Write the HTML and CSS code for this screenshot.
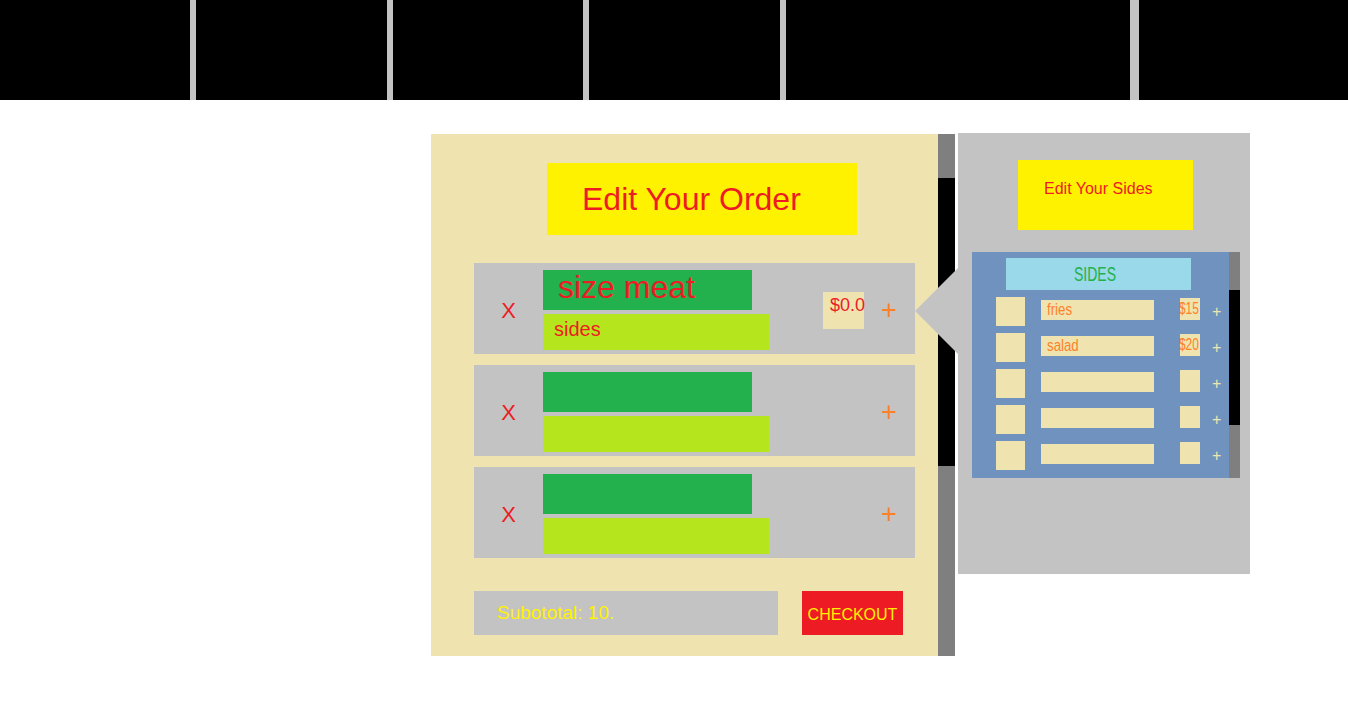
FILE: index.html
```html
<!DOCTYPE html>
<html>

<head>
    <title>Edit Your Order</title>
    <link rel="stylesheet" href="styles.css">
</head>

<body>
    <!-- top menu, empty cells for now -->
    <div class="nav">
        <div class="nav-cell c1"></div>
        <div class="nav-cell c2"></div>
        <div class="nav-cell c3"></div>
        <div class="nav-cell c4"></div>
        <div class="nav-cell c5"></div>
        <div class="nav-cell c6"></div>
    </div>

    <div class="content">
        <div class="order-wrap">
            <div class="order">
                <div class="order-title">Edit Your Order</div>

                <div class="item">
                    <div class="remove">X</div>
                    <div class="bars">
                        <div class="item-name">size meat</div>
                        <div class="item-sides">sides</div>
                    </div>
                    <div class="price">$0.0</div>
                    <div class="add">+</div>
                </div>

                <div class="item">
                    <div class="remove">X</div>
                    <div class="bars">
                        <div class="item-name"></div>
                        <div class="item-sides"></div>
                    </div>
                    <div class="price empty"></div>
                    <div class="add">+</div>
                </div>

                <div class="item">
                    <div class="remove">X</div>
                    <div class="bars">
                        <div class="item-name"></div>
                        <div class="item-sides"></div>
                    </div>
                    <div class="price empty"></div>
                    <div class="add">+</div>
                </div>

                <div class="footer">
                    <div class="subtotal">Subototal: 10.</div>
                    <button class="checkout">CHECKOUT</button>
                </div>
            </div>
            <div class="scroll big">
                <div class="thumb-bar"></div>
            </div>
        </div>

        <div class="sides-panel">
            <div class="pointer"></div>
            <div class="sides-title">Edit Your Sides</div>

            <div class="sides-wrap">
                <div class="sides-list">
                    <div class="sides-head"><span class="narrow">SIDES</span></div>

                    <div class="side-row">
                        <div class="side-pic"></div>
                        <div class="side-name"><span class="narrow">fries</span></div>
                        <div class="side-price"><span class="narrow">$15</span></div>
                        <div class="side-add">+</div>
                    </div>
                    <div class="side-row">
                        <div class="side-pic"></div>
                        <div class="side-name"><span class="narrow">salad</span></div>
                        <div class="side-price"><span class="narrow">$20</span></div>
                        <div class="side-add">+</div>
                    </div>
                    <div class="side-row">
                        <div class="side-pic"></div>
                        <div class="side-name"></div>
                        <div class="side-price"></div>
                        <div class="side-add">+</div>
                    </div>
                    <div class="side-row">
                        <div class="side-pic"></div>
                        <div class="side-name"></div>
                        <div class="side-price"></div>
                        <div class="side-add">+</div>
                    </div>
                    <div class="side-row">
                        <div class="side-pic"></div>
                        <div class="side-name"></div>
                        <div class="side-price"></div>
                        <div class="side-add">+</div>
                    </div>
                </div>
                <div class="scroll small">
                    <div class="thumb-bar"></div>
                </div>
            </div>
        </div>
    </div>
</body>

</html>
```

FILE: styles.css
```css
body {
    margin: 0;
    font-family: "Liberation Sans", Arial, sans-serif;
    background-color: white;
}

div {
    box-sizing: border-box;
}

/* menu bar */

.nav {
    display: flex;
    gap: 6px;
    height: 100px;
    background-color: #c3c3c3;
}

.nav-cell {
    background-color: black;
}

.c1 { width: 190px; }
.c2 { width: 191px; }
.c3 { width: 190px; }
.c4 { width: 191px; }
.c5 { width: 344px; }
.c6 { flex: 1; margin-left: 3px; }

.content {
    display: flex;
    align-items: flex-start;
    padding-top: 33px;
    padding-left: 431px;
}

/* order panel */

.order-wrap {
    display: flex;
    margin-top: 1px;
}

.order {
    width: 507px;
    height: 522px;
    background-color: #efe4b0;
    padding-top: 29px;
    padding-left: 43px;
}

.order-title {
    width: 310px;
    height: 72px;
    margin-left: 73px;
    margin-bottom: 28px;
    padding-left: 35px;
    display: flex;
    align-items: center;
    background-color: #fff200;
    color: #ed1c24;
    font-size: 32px;
}

.item {
    display: flex;
    align-items: center;
    width: 441px;
    height: 91px;
    margin-bottom: 11px;
    background-color: #c3c3c3;
}

.remove {
    width: 69px;
    padding-top: 4px;
    text-align: center;
    color: #ed1c24;
    font-size: 22px;
}

.bars {
    align-self: stretch;
    width: 226px;
    padding-top: 7px;
    display: flex;
    flex-direction: column;
    gap: 4px;
}

.item-name {
    width: 209px;
    height: 40px;
    padding-left: 15px;
    background-color: #22b14c;
    color: #ed1c24;
    font-size: 32px;
    line-height: 34px;
    white-space: nowrap;
}

.item-sides {
    height: 36px;
    padding-left: 11px;
    background-color: #b5e61d;
    color: #ed1c24;
    font-size: 20px;
    line-height: 30px;
}

.price {
    width: 41px;
    height: 37px;
    margin-left: 54px;
    margin-top: 3px;
    padding-left: 7px;
    background-color: #efe4b0;
    color: #ed1c24;
    font-size: 18px;
    line-height: 26px;
    white-space: nowrap;
}

.price.empty {
    background-color: transparent;
}

.add {
    margin-left: 17px;
    margin-top: 4px;
    color: #ff7f27;
    font-size: 27px;
}

.footer {
    display: flex;
    gap: 24px;
    margin-top: 33px;
}

.subtotal {
    width: 304px;
    height: 44px;
    padding-left: 23px;
    display: flex;
    align-items: center;
    background-color: #c3c3c3;
    color: #fff200;
    font-size: 19px;
}

.checkout {
    width: 101px;
    height: 44px;
    padding: 4px 0 0 0;
    border: none;
    background-color: #ed1c24;
    color: #fff200;
    font-family: "Liberation Sans", Arial, sans-serif;
    font-size: 16px;
}

/* fake scrollbars */

.scroll {
    background-color: #7f7f7f;
}

.scroll.big {
    width: 17px;
    height: 522px;
    padding-top: 44px;
}

.scroll.big .thumb-bar {
    height: 288px;
    background-color: black;
}

.scroll.small {
    width: 11px;
    padding-top: 38px;
}

.scroll.small .thumb-bar {
    height: 135px;
    background-color: black;
}

/* sides panel */

.sides-panel {
    position: relative;
    width: 292px;
    height: 441px;
    margin-left: 3px;
    padding-top: 27px;
    background-color: #c3c3c3;
}

.pointer {
    position: absolute;
    left: -43px;
    top: 135px;
    width: 0;
    height: 0;
    border-top: 43px solid transparent;
    border-bottom: 43px solid transparent;
    border-right: 43px solid #c3c3c3;
}

.sides-title {
    width: 175px;
    height: 70px;
    margin-left: 60px;
    padding-top: 19px;
    padding-left: 26px;
    background-color: #fff200;
    color: #ed1c24;
    font-size: 16px;
    line-height: 20px;
}

.sides-wrap {
    display: flex;
    margin-top: 22px;
    margin-left: 14px;
}

.sides-list {
    width: 257px;
    padding-top: 6px;
    padding-bottom: 8px;
    background-color: #7092be;
}

/* the sides list uses a narrow face, squeeze the normal one */
.narrow {
    display: inline-block;
    transform: scaleX(0.78);
    transform-origin: left center;
}

.sides-head {
    width: 185px;
    height: 32px;
    margin-left: 34px;
    margin-bottom: 7px;
    padding-left: 68px;
    background-color: #99d9ea;
    color: #22b14c;
    font-size: 20px;
    line-height: 32px;
}

.sides-head .narrow {
    transform: scaleX(0.7);
}

.side-row {
    display: flex;
    align-items: flex-start;
    height: 29px;
    margin-left: 24px;
    margin-bottom: 7px;
}

.side-row:last-child {
    margin-bottom: 0;
}

.side-pic {
    width: 29px;
    height: 29px;
    background-color: #efe4b0;
}

.side-name {
    width: 113px;
    height: 20px;
    margin-left: 16px;
    margin-top: 3px;
    padding-left: 6px;
    background-color: #efe4b0;
    color: #ff7f27;
    font-size: 17px;
    line-height: 20px;
}

.side-price {
    width: 20px;
    height: 22px;
    margin-left: 26px;
    margin-top: 1px;
    background-color: #efe4b0;
    color: #ff7f27;
    font-size: 17px;
    line-height: 22px;
    white-space: nowrap;
}

.side-price .narrow {
    transform: scaleX(0.7);
    margin-left: -1px;
}

.side-add {
    margin-left: 12px;
    color: #efe4b0;
    font-size: 16px;
    line-height: 29px;
}
```
